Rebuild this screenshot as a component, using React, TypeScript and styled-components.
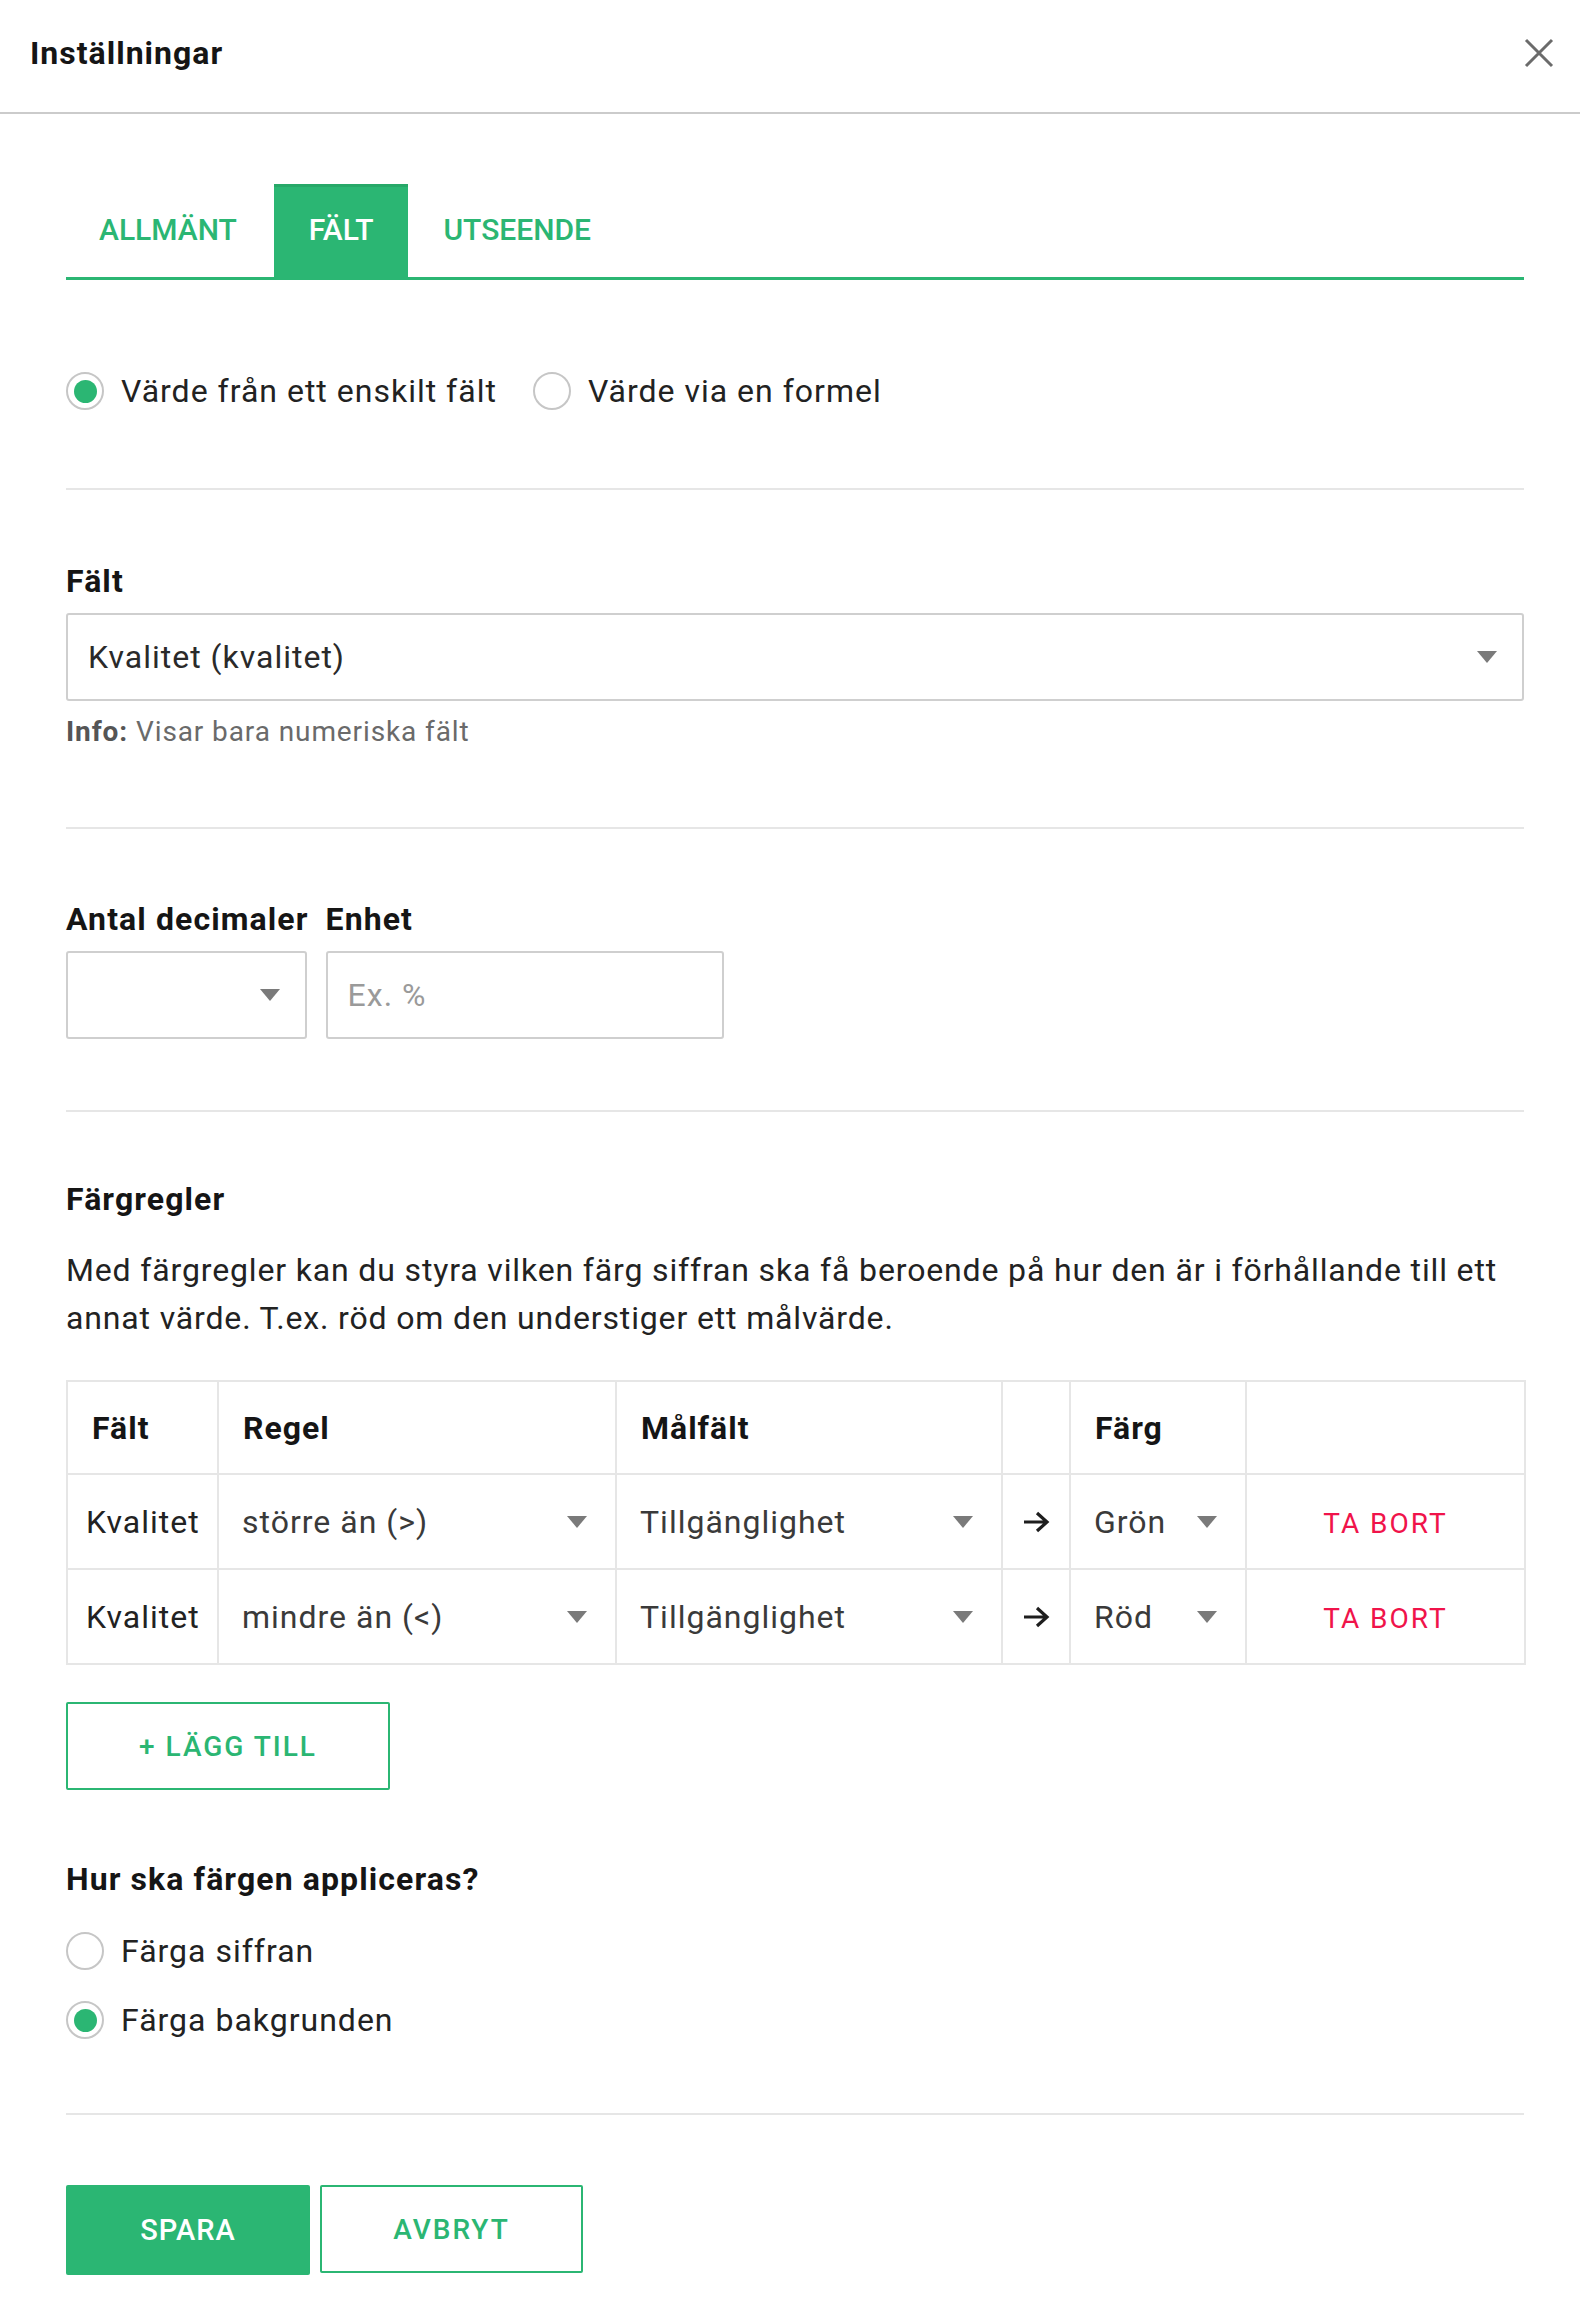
import React from 'react';
import styled, { createGlobalStyle } from 'styled-components';

const GREEN = '#2bb673';
const RED = '#f0134a';

const GlobalStyle = createGlobalStyle`
  html, body {
    margin: 0;
    padding: 0;
    background: #ffffff;
  }
  body {
    font-family: Roboto, "Liberation Sans", Arial, sans-serif;
    color: #222222;
  }
  * {
    box-sizing: border-box;
  }
`;

interface RadioProps {
  checked?: boolean;
  label: string;
}

function Radio({ checked, label }: RadioProps) {
  return (
    <RadioLabel>
      <RadioCircle>{checked && <RadioDot />}</RadioCircle>
      <span>{label}</span>
    </RadioLabel>
  );
}

function Caret() {
  return (
    <CaretIcon viewBox="0 0 20 12" aria-hidden>
      <path d="M0 0 L20 0 L10 12 Z" fill="#7a7a7a" />
    </CaretIcon>
  );
}

interface SelectCellProps {
  value: string;
}

function SelectCell({ value }: SelectCellProps) {
  return (
    <InlineSelect>
      <span>{value}</span>
      <Caret />
    </InlineSelect>
  );
}

const rules = [
  { field: 'Kvalitet', rule: 'större än (>)', target: 'Tillgänglighet', color: 'Grön' },
  { field: 'Kvalitet', rule: 'mindre än (<)', target: 'Tillgänglighet', color: 'Röd' },
];

function App() {
  return (
    <>
      <GlobalStyle />
      <Page>
        <Header>
          <Title>Inställningar</Title>
          <CloseButton aria-label="Stäng">
            <svg width="30" height="30" viewBox="0 0 30 30">
              <path d="M2 2 L28 28 M28 2 L2 28" stroke="#6b6b6b" strokeWidth="3" />
            </svg>
          </CloseButton>
        </Header>

        <Content>
          <Tabs>
            <Tab>ALLMÄNT</Tab>
            <Tab $active>FÄLT</Tab>
            <Tab>UTSEENDE</Tab>
          </Tabs>

          <RadioRow>
            <Radio checked label="Värde från ett enskilt fält" />
            <Radio label="Värde via en formel" />
          </RadioRow>

          <Divider $top={77} />

          <Section $top={73}>
            <Label>Fält</Label>
            <SelectBox>
              <span>Kvalitet (kvalitet)</span>
              <Caret />
            </SelectBox>
            <Info>
              <b>Info:</b> Visar bara numeriska fält
            </Info>
          </Section>

          <Divider $top={79} />

          <Section $top={72}>
            <FieldRow>
              <FieldCol>
                <Label>Antal decimaler</Label>
                <SelectBox $width={241}>
                  <span />
                  <Caret />
                </SelectBox>
              </FieldCol>
              <FieldCol>
                <Label>Enhet</Label>
                <TextInput placeholder="Ex. %" />
              </FieldCol>
            </FieldRow>
          </Section>

          <Divider $top={71} />

          <Section $top={69}>
            <Label>Färgregler</Label>
            <Paragraph>
              Med färgregler kan du styra vilken färg siffran ska få beroende på hur den är i förhållande till ett
              annat värde. T.ex. röd om den understiger ett målvärde.
            </Paragraph>

            <RuleTable>
              <colgroup>
                <col style={{ width: 151 }} />
                <col style={{ width: 398 }} />
                <col style={{ width: 386 }} />
                <col style={{ width: 68 }} />
                <col style={{ width: 176 }} />
                <col style={{ width: 279 }} />
              </colgroup>
              <thead>
                <tr>
                  <Th>Fält</Th>
                  <Th>Regel</Th>
                  <Th>Målfält</Th>
                  <Th />
                  <Th>Färg</Th>
                  <Th />
                </tr>
              </thead>
              <tbody>
                {rules.map((r, i) => (
                  <tr key={i}>
                    <Td $pad={18}>{r.field}</Td>
                    <Td $pad={0}>
                      <SelectCell value={r.rule} />
                    </Td>
                    <Td $pad={0}>
                      <SelectCell value={r.target} />
                    </Td>
                    <Td $pad={0}>
                      <ArrowWrap>
                        <svg width="28" height="24" viewBox="0 0 28 24">
                          <path
                            d="M2 12 H25 M15 3 L25 12 L15 21"
                            stroke="#1e1e1e"
                            strokeWidth="3.2"
                            fill="none"
                          />
                        </svg>
                      </ArrowWrap>
                    </Td>
                    <Td $pad={0}>
                      <SelectCell value={r.color} />
                    </Td>
                    <Td $pad={0}>
                      <RemoveButton>TA BORT</RemoveButton>
                    </Td>
                  </tr>
                ))}
              </tbody>
            </RuleTable>

            <OutlineButton $width={324} $top={37}>+ LÄGG TILL</OutlineButton>
          </Section>

          <Section $top={71}>
            <Label>Hur ska färgen appliceras?</Label>
            <RadioColumn>
              <Radio label="Färga siffran" />
              <Radio checked label="Färga bakgrunden" />
            </RadioColumn>
          </Section>

          <Divider $top={73} />

          <ButtonRow>
            <PrimaryButton>SPARA</PrimaryButton>
            <OutlineButton $width={263} $top={0}>
              AVBRYT
            </OutlineButton>
          </ButtonRow>
        </Content>
      </Page>
    </>
  );
}

export default App;

const Page = styled.div`
  width: 1580px;
  min-height: 2311px;
  background: #ffffff;
`;

const Header = styled.header`
  height: 114px;
  padding: 0 26px 6px 30px;
  border-bottom: 2px solid #cbcbcb;
  display: flex;
  align-items: center;
  justify-content: space-between;
`;

const Title = styled.h1`
  margin: 0;
  font-size: 32px;
  font-weight: 700;
  letter-spacing: 1px;
  color: #151515;
`;

const CloseButton = styled.button`
  border: 0;
  background: transparent;
  padding: 0;
  width: 30px;
  height: 30px;
  cursor: pointer;
  display: flex;
`;

const Content = styled.main`
  padding: 0 56px 36px 66px;
`;

const Tabs = styled.nav`
  margin-top: 70px;
  height: 96px;
  display: flex;
  border-bottom: 3px solid ${GREEN};
`;

const Tab = styled.div<{ $active?: boolean }>`
  height: 93px;
  padding: 0 35px 5px;
  display: flex;
  align-items: center;
  font-size: 30px;
  font-weight: 500;
  color: ${(p) => (p.$active ? '#ffffff' : GREEN)};
  background: ${(p) => (p.$active ? GREEN : 'transparent')};
  border-top: 3px solid ${(p) => (p.$active ? '#27a868' : 'transparent')};
  margin-left: ${(p) => (p.$active ? '2px' : '0')};
  cursor: pointer;

  &:first-child {
    padding-left: 33px;
  }
`;

const RadioRow = styled.div`
  margin-top: 91px;
  height: 40px;
  display: flex;
  align-items: center;
  gap: 36px;
`;

const RadioColumn = styled.div`
  margin-top: 34px;
  display: flex;
  flex-direction: column;
  gap: 29px;
`;

const RadioLabel = styled.label`
  height: 40px;
  display: flex;
  align-items: center;
  gap: 17px;
  font-size: 32px;
  letter-spacing: 1px;
  color: #222222;
  cursor: pointer;
`;

const RadioCircle = styled.span`
  width: 38px;
  height: 38px;
  flex: none;
  border: 2px solid #c6c6c6;
  border-radius: 50%;
  display: flex;
  align-items: center;
  justify-content: center;
`;

const RadioDot = styled.span`
  width: 23px;
  height: 23px;
  border-radius: 50%;
  background: ${GREEN};
`;

const Divider = styled.hr<{ $top: number }>`
  margin: ${(p) => p.$top}px 0 0;
  border: 0;
  height: 2px;
  background: #e6e6e6;
`;

const Section = styled.section<{ $top: number }>`
  margin-top: ${(p) => p.$top}px;
`;

const Label = styled.div`
  font-size: 32px;
  line-height: 36px;
  font-weight: 700;
  letter-spacing: 1.1px;
  color: #151515;
  white-space: nowrap;
`;

const SelectBox = styled.div<{ $width?: number }>`
  margin-top: 14px;
  width: ${(p) => (p.$width ? `${p.$width}px` : '100%')};
  height: 88px;
  padding: 0 25px 0 20px;
  border: 2px solid #cfcfcf;
  border-radius: 3px;
  display: flex;
  align-items: center;
  justify-content: space-between;
  font-size: 32px;
  letter-spacing: 1px;
  color: #2a2a2a;
`;

const CaretIcon = styled.svg`
  width: 20px;
  height: 12px;
  flex: none;
`;

const Info = styled.div`
  margin-top: 15px;
  font-size: 28px;
  line-height: 32px;
  letter-spacing: 0.9px;
  color: #6a6a6a;

  b {
    color: #555555;
    font-weight: 700;
  }
`;

const FieldRow = styled.div`
  display: flex;
  gap: 17px;
`;

const FieldCol = styled.div`
  display: flex;
  flex-direction: column;
`;

const TextInput = styled.input`
  margin-top: 14px;
  width: 398px;
  height: 88px;
  padding: 0 20px;
  border: 2px solid #cfcfcf;
  border-radius: 3px;
  font-family: inherit;
  font-size: 32px;
  letter-spacing: 1px;
  color: #2a2a2a;
  outline: none;

  &::placeholder {
    color: #9a9a9a;
  }
`;

const Paragraph = styled.p`
  margin: 29px 0 0;
  font-size: 32px;
  line-height: 48px;
  letter-spacing: 0.85px;
  color: #222222;
`;

const RuleTable = styled.table`
  margin-top: 38px;
  width: 100%;
  table-layout: fixed;
  border-collapse: collapse;
  font-size: 32px;
  letter-spacing: 1px;
`;

const Th = styled.th`
  height: 93px;
  padding: 0 24px;
  border: 2px solid #e6e6e6;
  text-align: left;
  font-weight: 700;
  color: #151515;
`;

const Td = styled.td<{ $pad: number }>`
  height: 95px;
  padding: 0 ${(p) => p.$pad}px;
  border: 2px solid #e6e6e6;
  color: #222222;
  white-space: nowrap;
`;

const InlineSelect = styled.div`
  height: 100%;
  padding: 0 28px 0 23px;
  display: flex;
  align-items: center;
  justify-content: space-between;
  color: #3a3a3a;
`;

const ArrowWrap = styled.div`
  display: flex;
  justify-content: center;
  align-items: center;
`;

const RemoveButton = styled.button`
  width: 100%;
  border: 0;
  background: transparent;
  font-family: inherit;
  font-size: 28px;
  letter-spacing: 2px;
  color: ${RED};
  cursor: pointer;
`;

const OutlineButton = styled.button<{ $width: number; $top: number }>`
  display: block;
  margin-top: ${(p) => p.$top}px;
  width: ${(p) => p.$width}px;
  height: 88px;
  border: 2px solid ${GREEN};
  border-radius: 2px;
  background: #ffffff;
  font-family: inherit;
  font-size: 28px;
  font-weight: 500;
  letter-spacing: 2px;
  color: ${GREEN};
  cursor: pointer;
`;

const ButtonRow = styled.div`
  margin-top: 70px;
  display: flex;
  gap: 10px;
`;

const PrimaryButton = styled.button`
  width: 244px;
  height: 90px;
  border: 0;
  border-radius: 2px;
  background: ${GREEN};
  font-family: inherit;
  font-size: 29px;
  font-weight: 500;
  letter-spacing: 1px;
  color: #ffffff;
  cursor: pointer;
`;
